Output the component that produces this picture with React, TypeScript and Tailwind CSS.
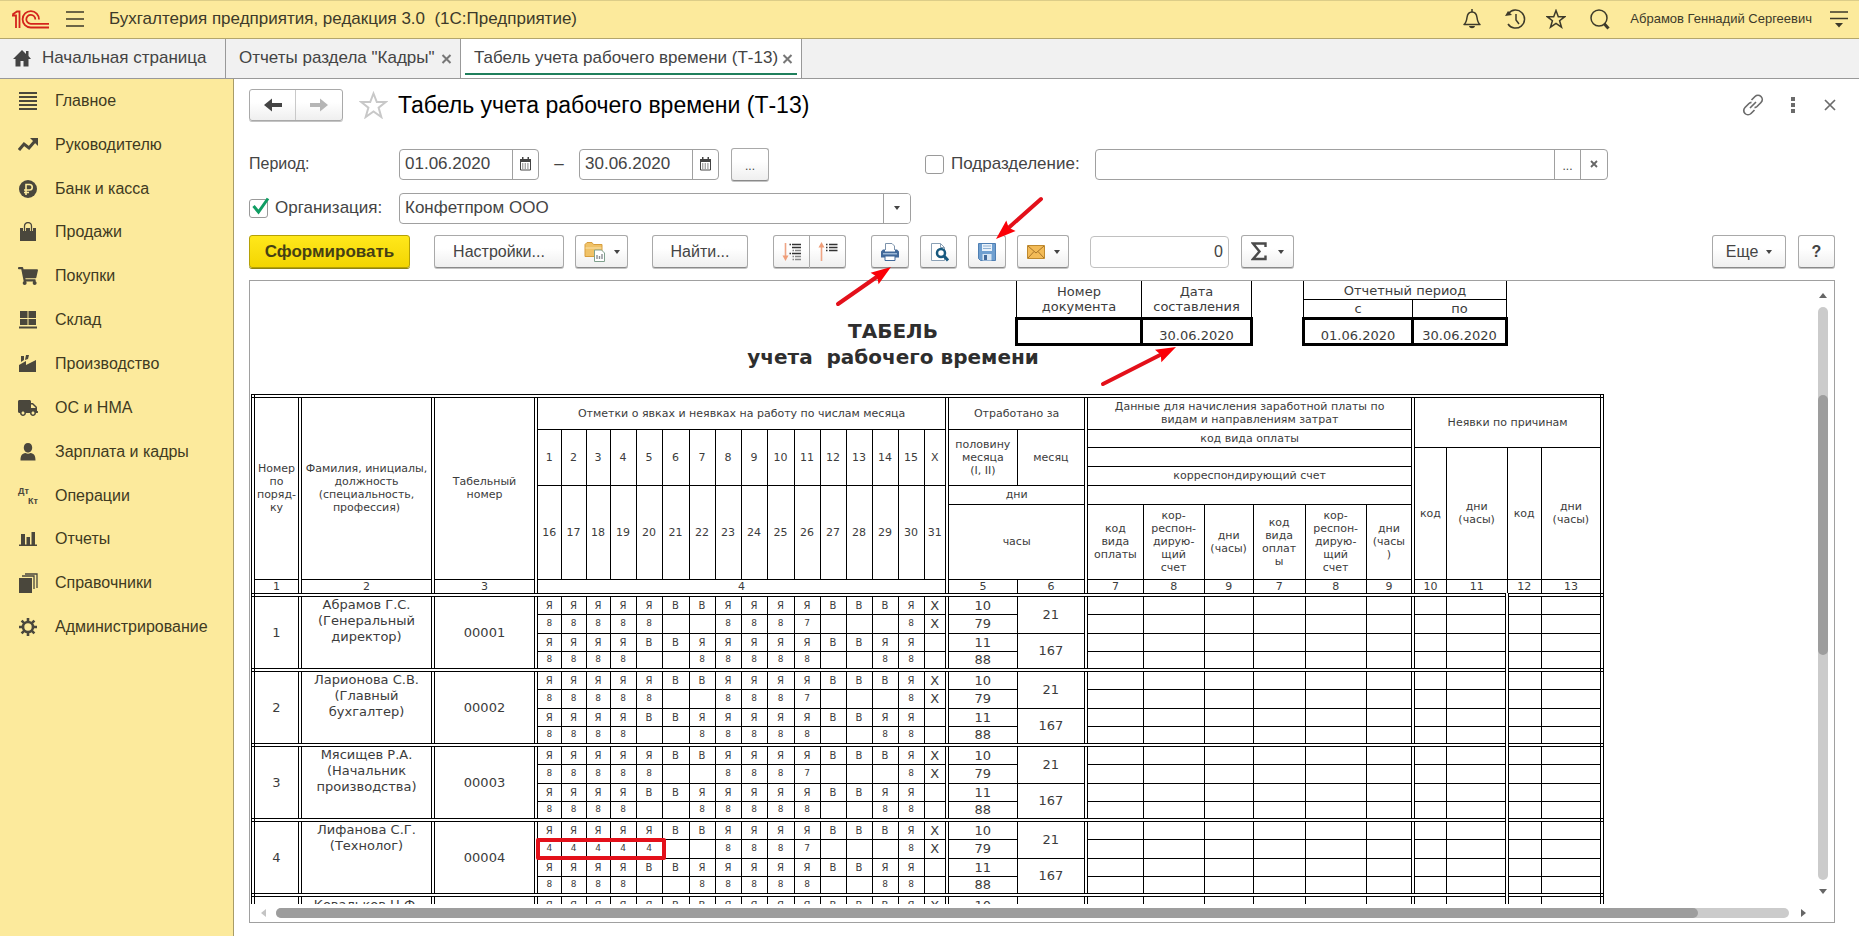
import type { ReactNode } from 'react'
import clsx from 'clsx'
import { FaShoppingCart, FaTruck } from 'react-icons/fa'

const iconProps = { width: 20, height: 20, viewBox: '0 0 20 20', 'aria-hidden': true }

const menu: { label: string; icon: ReactNode }[] = [
  {
    label: 'Главное',
    icon: (
      <svg {...iconProps}>
        <path d="M1 1h18v2H1zM1 5h18v2H1zM1 9h18v2H1zM1 13h18v2H1zM1 17h18v2H1z" fill="currentColor" />
      </svg>
    ),
  },
  {
    label: 'Руководителю',
    icon: (
      <svg {...iconProps}>
        <path d="M1 15l5-6 5 4 6-7" fill="none" stroke="currentColor" strokeWidth="3" />
        <path d="M12 3h8v8z" fill="currentColor" />
      </svg>
    ),
  },
  {
    label: 'Банк и касса',
    icon: (
      <svg {...iconProps}>
        <circle cx="10" cy="10" r="9" fill="currentColor" />
        <path d="M8 16V5.500h3.500a2.500 2.500 0 0 1 0 5.500H6M6 13.500h5" fill="none" stroke="#fcea9c" strokeWidth="1.600" />
      </svg>
    ),
  },
  {
    label: 'Продажи',
    icon: (
      <svg {...iconProps}>
        <path d="M2 6h16v13H2z" fill="currentColor" />
        <path d="M6.500 9V4a3.500 3.500 0 0 1 7 0v5" fill="none" stroke="#fcea9c" strokeWidth="3" />
        <path d="M6.500 9V4a3.500 3.500 0 0 1 7 0v5" fill="none" stroke="currentColor" strokeWidth="1.300" />
      </svg>
    ),
  },
  { label: 'Покупки', icon: <FaShoppingCart size={20} aria-hidden /> },
  {
    label: 'Склад',
    icon: (
      <svg {...iconProps}>
        <path d="M2 1h7.500v7H2zM10.500 1H18v7h-7.500zM2 9h7.500v6H2zM10.500 9H18v6h-7.500zM1 16.500h18v2H1z" fill="currentColor" />
      </svg>
    ),
  },
  {
    label: 'Производство',
    icon: (
      <svg {...iconProps}>
        <path d="M1 18v-7l7-4v4l10-5v12zM3 2h3v4L3 8zM8 1h3l-1 4-3 1z" fill="currentColor" />
      </svg>
    ),
  },
  { label: 'ОС и НМА', icon: <FaTruck size={20} aria-hidden /> },
  {
    label: 'Зарплата и кадры',
    icon: (
      <svg {...iconProps}>
        <path
          d="M10 1c2.600 0 4.200 1.800 4.200 4.500S12.600 10.500 10 10.500 5.800 8.200 5.800 5.500 7.400 1 10 1zM2.500 18.500c0-5 1.500-7 5-7.500 1.500 1 3.500 1 5 0 3.500.5 5 2.500 5 7.500z"
          fill="currentColor"
        />
      </svg>
    ),
  },
  {
    label: 'Операции',
    icon: (
      <span className="flex w-5 flex-col text-[9px] leading-[10px] font-bold" aria-hidden>
        <span>Дт</span>
        <span className="text-right">Кт</span>
      </span>
    ),
  },
  {
    label: 'Отчеты',
    icon: (
      <svg {...iconProps}>
        <path d="M3 5h4v11H3zM8.500 8h3.500v8H8.500zM13.500 3h3.500v13h-3.500zM1 15.500h18V17H1z" fill="currentColor" />
      </svg>
    ),
  },
  {
    label: 'Справочники',
    icon: (
      <svg {...iconProps}>
        <path d="M1 5h13v15H1z" fill="currentColor" />
        <path d="M4 3h12v13M7 1h12v14" fill="none" stroke="currentColor" strokeWidth="1.300" />
      </svg>
    ),
  },
  {
    label: 'Администрирование',
    icon: (
      <svg {...iconProps}>
        <circle cx="10" cy="10" r="5" fill="none" stroke="currentColor" strokeWidth="2.600" />
        <path
          d="M10 1v4M10 15v4M1 10h4M15 10h4M3.600 3.600l2.800 2.800M13.600 13.600l2.800 2.800M3.600 16.400l2.800-2.800M13.600 6.400l2.800-2.800"
          stroke="currentColor"
          strokeWidth="2.600"
        />
      </svg>
    ),
  },
]

const columnGroups = [
  [47],
  [133],
  [103],
  [25, 25, 24, 26, 26, 27, 26, 26, 26, 27, 26, 26, 26, 26, 26, 23],
  [70, 69],
  [57, 61, 49, 52, 61, 47],
  [33, 61, 34, 61],
]

const firstHalf = ['1', '2', '3', '4', '5', '6', '7', '8', '9', '10', '11', '12', '13', '14', '15', 'X']
const secondHalf = ['16', '17', '18', '19', '20', '21', '22', '23', '24', '25', '26', '27', '28', '29', '30', '31']

const days1 = 'ЯЯЯЯЯВВЯЯЯЯВВВЯX'
const hours1 = '88888  8887   8X'
const days2 = 'ЯЯЯЯВВЯЯЯЯЯВВЯЯ '
const hours2 = '8888  88888  88 '

const employees = [
  { name: 'Абрамов Г.С.', position: '(Генеральный директор)', code: '00001', hours: hours1 },
  { name: 'Ларионова С.В.', position: '(Главный бухгалтер)', code: '00002', hours: hours1 },
  { name: 'Мясищев Р.А.', position: '(Начальник производства)', code: '00003', hours: hours1 },
  { name: 'Лифанова С.Г.', position: '(Технолог)', code: '00004', hours: '44444  8887   8X', marked: true },
  { name: 'Ковальков Н.Ф.', position: '', code: '00005', hours: hours1 },
]

const buttonClass =
  'flex h-[33px] shrink-0 items-center justify-center rounded-[3px] border border-[#a9a9a9] border-b-[#8a8a8a] bg-linear-to-b from-white from-40% to-[#efefef] text-[#444] shadow-[0_1px_0_#c4c4c4]'

const fieldClass = 'flex h-[31px] items-stretch overflow-hidden rounded-[4px] border border-[#a0a0a0] bg-white'

function Caret() {
  return <span className="border-x-[3px] border-t-4 border-x-transparent border-t-[#444]" />
}

type ArrowProps = {
  className: string
  width: number
  height: number
  from: [number, number]
  to: [number, number]
}

function Arrow({ className, width, height, from, to }: ArrowProps) {
  const angle = Math.atan2(to[1] - from[1], to[0] - from[0])
  const at = (along: number, side: number) => [
    to[0] - along * Math.cos(angle) - side * Math.sin(angle),
    to[1] - along * Math.sin(angle) + side * Math.cos(angle),
  ]
  const neck = at(14, 0)
  const head = [to, at(20, 7), at(17, 0), at(20, -7)].map((p) => p.join(',')).join(' ')

  return (
    <svg className={clsx('pointer-events-none absolute z-10 max-w-none', className)} width={width} height={height} aria-hidden>
      <line x1={from[0]} y1={from[1]} x2={neck[0]} y2={neck[1]} stroke="#e3101a" strokeWidth="4" strokeLinecap="round" />
      <polygon points={head} fill="#fb0007" />
    </svg>
  )
}

function CalendarIcon() {
  return (
    <svg width="13" height="14" viewBox="0 0 13 14" aria-hidden>
      <path d="M1 2h11v3H1zM3 0h1.500v3H3zM8.500 0H10v3H8.500z" fill="#444" />
      <path d="M1.500 2.500h10v10.500h-10z" fill="none" stroke="#444" />
      <path d="M3 7h7M3 9h7M3 11h7" stroke="#555" strokeDasharray="1.400 1.200" />
    </svg>
  )
}

function Header() {
  return (
    <header className="flex h-[39px] shrink-0 items-center border-t border-b border-t-[#dccd88] border-b-[#b3a66c] bg-[#fcea9c] pr-[10px] pb-px pl-3 text-[#3d3a2a]">
      <svg width="37" height="19" viewBox="0 0 37 19" fill="none" stroke="#d4241c" strokeWidth="1.800" role="img" aria-label="1С">
        <path d="M0 5.500h4V18M0.500 4.500L5 1.500h2.500V18" />
        <path d="M27 9.500A8.200 8.200 0 1 0 18.800 17.500H37" />
        <path d="M23.300 9.500A4.500 4.500 0 1 0 18.800 13.800H37" />
      </svg>
      <button aria-label="Меню" className="ml-4">
        <svg width="20" height="18" viewBox="0 0 20 18" stroke="currentColor" strokeWidth="1.500" aria-hidden>
          <path d="M1 2h18M1 9h18M1 16h18" />
        </svg>
      </button>
      <span className="ml-6 text-[17px] whitespace-pre">Бухгалтерия предприятия, редакция 3.0  (1С:Предприятие)</span>

      <div className="ml-auto flex items-center">
        <button aria-label="Уведомления">
          <svg width="20" height="22" viewBox="0 0 20 22" fill="none" stroke="currentColor" strokeWidth="1.500" aria-hidden>
            <path d="M2 16.500c2-1.500 2.500-3 3-7C5.500 5.500 7.500 4 10 4s4.500 1.500 5 5.500c.5 4 1 5.500 3 7z" strokeLinejoin="round" />
            <path d="M10 1v3" />
            <path d="M7 18h6c-.5 3-5.500 3-6 0z" fill="currentColor" stroke="none" />
          </svg>
        </button>
        <button aria-label="История" className="ml-[22px]">
          <svg width="22" height="22" viewBox="0 0 22 22" fill="none" stroke="currentColor" strokeWidth="1.500" aria-hidden>
            <path d="M4.500 5.500a9 9 0 1 1-.5 10.500" />
            <path d="M1 8l7-1-4-4z" fill="currentColor" stroke="none" />
            <path d="M12 6v6l3 4" />
          </svg>
        </button>
        <button aria-label="Избранное" className="ml-5">
          <svg width="20" height="20" viewBox="0 0 20 20" fill="none" stroke="currentColor" strokeWidth="1.500" aria-hidden>
            <path d="M10 1.500l2.300 6.200h6.400l-5.100 4 1.900 6.500L10 14.400l-5.500 3.800 1.900-6.500-5.100-4h6.400z" />
          </svg>
        </button>
        <button aria-label="Поиск" className="mr-5 ml-6">
          <svg width="20" height="21" viewBox="0 0 20 21" fill="none" stroke="currentColor" strokeWidth="1.500" aria-hidden>
            <circle cx="9" cy="9" r="8" />
            <path d="M14 14.500l4.500 5" strokeWidth="3" />
          </svg>
        </button>
        <span className="text-[13px]">Абрамов Геннадий Сергеевич</span>
        <button aria-label="Настройки окна" className="ml-[17px]">
          <svg width="20" height="18" viewBox="0 0 20 18" aria-hidden>
            <path d="M1 2h18M1 8.500h18" stroke="currentColor" strokeWidth="1.600" />
            <path d="M6 13h8l-4 4.500z" fill="currentColor" />
          </svg>
        </button>
      </div>
    </header>
  )
}

function Tabs() {
  return (
    <nav className="flex h-10 shrink-0 border-b border-[#999] bg-[#f1f1f1] text-[17px] text-[#444]">
      <a href="#home" className="flex w-[226px] items-center border-r border-[#999] pb-[2px] pl-3">
        <svg width="20" height="18" viewBox="0 0 20 18" className="mr-[10px]" aria-hidden>
          <path d="M10 1L1 10h2.500v7.500h5V12h3v5.500h5V10H19L16.500 7V2h-2.500v3z" fill="#444" />
        </svg>
        Начальная страница
      </a>
      <div className="flex w-[235px] items-center justify-between border-r border-[#999] pr-2 pb-[2px] pl-[13px]">
        <a href="#reports">Отчеты раздела "Кадры"</a>
        <CloseButton />
      </div>
      <div className="relative flex w-[341px] items-center justify-between border-r border-[#999] bg-white pr-2 pb-[2px] pl-[13px]">
        <a href="#t13">Табель учета рабочего времени (Т-13)</a>
        <CloseButton />
        <span className="absolute right-1 bottom-[3px] left-1 h-[2px] bg-[#1f7f5c]" />
      </div>
    </nav>
  )
}

function CloseButton() {
  return (
    <button aria-label="Закрыть" className="mt-[3px] text-[#777]">
      <svg width="11" height="10" viewBox="0 0 11 10" stroke="currentColor" strokeWidth="2" aria-hidden>
        <path d="M1.500 1l8 8M9.500 1l-8 8" />
      </svg>
    </button>
  )
}

function Sidebar() {
  return (
    <aside className="w-[234px] shrink-0 border-r border-[#a89c68] bg-[#fcea9c]">
      <ul className="grid h-[570px] auto-rows-fr text-base text-[#3f3a22]">
        {menu.map((item) => (
          <li key={item.label} className="flex items-center">
            <a href="#section" className="flex items-center gap-[17px] pl-[18px]">
              <span className="text-[#4a473c]">{item.icon}</span>
              {item.label}
            </a>
          </li>
        ))}
      </ul>
    </aside>
  )
}

function TitleRow() {
  return (
    <div className="flex h-8 items-center">
      <div className="flex h-8 rounded-[3px] border border-[#a9a9a9] bg-linear-to-b from-white from-40% to-[#efefef] shadow-[0_1px_0_#c4c4c4]">
        <button aria-label="Назад" className="flex w-[46px] items-center justify-center border-r border-[#c9c9c9] text-[#444]">
          <svg width="18" height="14" viewBox="0 0 18 14" aria-hidden>
            <path d="M0 7l8-6.500v4.500h10v4H8v4.500z" fill="currentColor" />
          </svg>
        </button>
        <button aria-label="Вперед" className="flex w-[46px] items-center justify-center text-[#b5b5b5]">
          <svg width="18" height="14" viewBox="0 0 18 14" aria-hidden>
            <path d="M18 7l-8-6.500v4.500H0v4h10v4.500z" fill="currentColor" />
          </svg>
        </button>
      </div>
      <button aria-label="В избранное" className="ml-4">
        <svg width="29" height="28" viewBox="0 0 29 28" fill="none" stroke="#c8c8c8" strokeWidth="2" aria-hidden>
          <path d="M14.500 2.500l3.300 8.500h9l-7.200 5.600 2.700 9.400-7.800-5.600L6.700 26l2.700-9.400L2.200 11h9z" />
        </svg>
      </button>
      <h1 className="ml-[10px] text-[23px] text-black">Табель учета рабочего времени (Т-13)</h1>
      <div className="ml-auto flex items-center text-[#6b6b6b]">
        <button aria-label="Ссылка">
          <svg width="22" height="22" viewBox="0 0 22 22" fill="none" stroke="currentColor" strokeWidth="1.700" aria-hidden>
            <path d="M9.500 6l3.500-3.500a4 4 0 0 1 6 6L15 12.500a4 4 0 0 1-2.500 1.100M12.500 16L9 19.500a4 4 0 0 1-6-6L7 9.500a4 4 0 0 1 2.500-1.100M8 14l6-6" />
          </svg>
        </button>
        <button aria-label="Еще действия" className="ml-6">
          <svg width="10" height="18" viewBox="0 0 10 18" aria-hidden>
            <path d="M3 1h4v4H3zM3 7h4v4H3zM3 13h4v4H3z" fill="currentColor" />
          </svg>
        </button>
        <button aria-label="Закрыть форму" className="mr-[-2px] ml-[25px]">
          <svg width="14" height="12" viewBox="0 0 14 12" stroke="currentColor" strokeWidth="1.700" aria-hidden>
            <path d="M2 1l10 10M12 1L2 11" />
          </svg>
        </button>
      </div>
    </div>
  )
}

function DateField({ id, label, value }: { id: string; label: string; value: string }) {
  return (
    <div className={clsx(fieldClass, 'w-[140px]')}>
      <input id={id} aria-label={label} defaultValue={value} className="w-0 flex-1 px-[5px] text-[#444] outline-none" />
      <button aria-label="Выбрать дату" className="flex w-[26px] items-center justify-center border-l border-[#a0a0a0]">
        <CalendarIcon />
      </button>
    </div>
  )
}

function Checkbox({ id, checked }: { id: string; checked?: boolean }) {
  return (
    <span className="relative flex">
      <input
        id={id}
        type="checkbox"
        defaultChecked={checked}
        className="peer size-[19px] appearance-none rounded-[3px] border border-[#9a9a9a] bg-white"
      />
      <svg
        className="pointer-events-none absolute -top-[2px] left-[2px] hidden peer-checked:block"
        width="19"
        height="18"
        viewBox="0 0 19 18"
        fill="none"
        aria-hidden
      >
        <path d="M2.500 9l5 6L17 1.500" stroke="#0f9d63" strokeWidth="3" />
      </svg>
    </span>
  )
}

function Filters() {
  return (
    <div className="mt-[27px] text-[17px] text-[#444]">
      <div className="flex h-8 items-center">
        <label htmlFor="from" className="w-[150px] shrink-0 text-base">
          Период:
        </label>
        <DateField id="from" label="Начало периода" value="01.06.2020" />
        <span className="w-10 text-center">–</span>
        <DateField id="to" label="Конец периода" value="30.06.2020" />
        <button aria-label="Выбрать период" className={clsx(buttonClass, 'ml-3 w-[38px] pt-1 text-xs')}>
          ...
        </button>
        <div className="ml-[156px] flex items-center">
          <Checkbox id="division-on" />
          <label htmlFor="division-on" className="ml-[7px] w-36">
            Подразделение:
          </label>
        </div>
        <div className={clsx(fieldClass, 'w-[513px]')}>
          <input aria-label="Подразделение" className="w-0 flex-1 px-[5px] outline-none" />
          <button aria-label="Выбрать" className="w-[26px] border-l border-[#a0a0a0] pt-1 text-xs">
            ...
          </button>
          <button aria-label="Очистить" className="flex w-[27px] items-center justify-center border-l border-[#a0a0a0]">
            <svg width="8" height="8" viewBox="0 0 8 8" stroke="#666" strokeWidth="1.800" aria-hidden>
              <path d="M1 1l6 6M7 1L1 7" />
            </svg>
          </button>
        </div>
      </div>

      <div className="mt-3 flex h-8 items-center">
        <Checkbox id="org-on" checked />
        <label htmlFor="org-on" className="ml-[7px] w-[124px]">
          Организация:
        </label>
        <div className={clsx(fieldClass, 'relative w-[512px]')}>
          <select aria-label="Организация" className="w-full appearance-none px-[5px] text-[#444] outline-none">
            <option>Конфетпром ООО</option>
          </select>
          <span className="pointer-events-none absolute inset-y-0 right-0 flex w-[27px] items-center justify-center border-l border-[#a0a0a0] bg-white">
            <Caret />
          </span>
        </div>
      </div>
    </div>
  )
}

function Toolbar() {
  return (
    <div className="mt-[11px] flex h-[33px] items-center text-base">
      <button className="h-[33px] w-[161px] shrink-0 rounded-[3px] border border-[#b5a106] bg-linear-to-b from-[#ffe81a] to-[#f3d500] text-[17px] font-bold text-[#453f14] shadow-[0_1px_0_#8f8412]">
        Сформировать
      </button>
      <button className={clsx(buttonClass, 'ml-6 w-[130px]')}>Настройки...</button>
      <button aria-label="Варианты отчета" className={clsx(buttonClass, 'ml-[11px] w-[53px] gap-2')}>
        <svg width="22" height="22" viewBox="0 0 22 22" aria-hidden>
          <path d="M1 3.500L3 1.500h5l1.500 2H18v12H1z" fill="#f0c267" stroke="#d79d3c" />
          <path d="M1.500 7h16" stroke="#fbe3ac" />
          <path d="M10.500 9h7l3 3v8.500h-10z" fill="#fff" stroke="#7fa08d" />
          <path d="M13 18v-4M15.500 18v-3M18 18v-5" stroke="#8a8f94" strokeWidth="1.400" />
        </svg>
        <Caret />
      </button>
      <button className={clsx(buttonClass, 'ml-6 w-24')}>Найти...</button>

      <button aria-label="Развернуть группы" className={clsx(buttonClass, 'ml-[25px] w-[37px] rounded-r-none')}>
        <svg width="20" height="20" viewBox="0 0 20 20" fill="none" aria-hidden>
          <path d="M3.500 1v13" stroke="#efa585" strokeWidth="1.600" />
          <path d="M0.500 13.500h6L3.500 19z" fill="#ef9d78" />
          <path d="M7.500 2.500h1.500M7.500 11.500h1.500M10 2.500h9M10 5.500h9M10 11.500h9" stroke="#333" strokeWidth="1.600" />
          <path d="M10.500 8.500h1.500M13 8.500h6M10.500 14.500h1.500M13 14.500h6M10.500 17.500h1.500M13 17.500h6" stroke="#888" strokeWidth="1.600" />
        </svg>
      </button>
      <button aria-label="Свернуть группы" className={clsx(buttonClass, 'w-9 rounded-l-none border-l-0')}>
        <svg width="20" height="20" viewBox="0 0 20 20" fill="none" aria-hidden>
          <path d="M3.500 5v14" stroke="#efa585" strokeWidth="1.600" />
          <path d="M0.500 5.500h6L3.500 0z" fill="#ef9d78" />
          <path d="M8 2.500h1.500M11 2.500h8.500M8 5.500h1.500M11 5.500h8.500M8 8.500h1.500M11 8.500h8.500" stroke="#333" strokeWidth="1.600" />
        </svg>
      </button>

      <span className="relative ml-[25px] flex">
        <button aria-label="Печать" className={clsx(buttonClass, 'w-[38px]')}>
          <svg width="20" height="20" viewBox="0 0 20 20" aria-hidden>
            <path d="M5.500 8V1.500H12l2.500 2.500v4" fill="#fff" stroke="#7d93ab" />
            <path d="M3 7.500h2v2h10v-2h2l2 2v6H1v-6z" fill="#41699a" />
            <path d="M3 11h14v1.500H3z" fill="#9db8d6" />
            <path d="M5 14h10v4.500H5z" fill="#fff" stroke="#41699a" />
          </svg>
        </button>
        <Arrow className="top-7 left-[-40px]" width={64} height={46} from={[7, 41]} to={[60, 4]} />
      </span>
      <button aria-label="Предварительный просмотр" className={clsx(buttonClass, 'ml-[11px] w-[37px]')}>
        <svg width="20" height="20" viewBox="0 0 20 20" fill="none" aria-hidden>
          <path d="M2.500 1.500h9l4 4v13h-13z" fill="#fff" stroke="#8aa0b5" />
          <path d="M11.500 1.500v4h4" stroke="#8aa0b5" />
          <circle cx="12" cy="11" r="4" stroke="#17597f" strokeWidth="2.500" fill="#fff" />
          <path d="M15 14l4 4.500" stroke="#17597f" strokeWidth="3" />
        </svg>
      </button>
      <span className="relative ml-[11px] flex">
        <button aria-label="Сохранить" className={clsx(buttonClass, 'w-[38px]')}>
          <svg width="20" height="20" viewBox="0 0 20 20" aria-hidden>
            <path d="M1.500 1.500h17v17h-15l-2-2z" fill="#6f9fd0" stroke="#4f7fb3" />
            <path d="M5 2h10v7H5z" fill="#eaf2fa" />
            <path d="M6 4h8M6 6.500h8" stroke="#8fb1d3" />
            <path d="M5.500 12h9v6.500h-9z" fill="#d7e5f3" />
            <path d="M7 13h3v5H7z" fill="#41699a" />
          </svg>
        </button>
        <Arrow className="-top-[42px] left-[24px]" width={56} height={50} from={[49, 6]} to={[4, 46]} />
      </span>
      <button aria-label="Отправить" className={clsx(buttonClass, 'ml-[11px] w-[52px] gap-[9px]')}>
        <svg width="18" height="14" viewBox="0 0 18 14" aria-hidden>
          <path d="M0.500 0.500h17v13h-17z" fill="#f3bb57" stroke="#bf8a2f" />
          <path d="M1 1l8 7 8-7M1 13l6-6.500M17 13l-6-6.500" fill="none" stroke="#a8752a" />
        </svg>
        <Caret />
      </button>
      <input
        aria-label="Сумма ячеек"
        defaultValue="0"
        className="ml-[21px] h-8 w-[139px] rounded-[4px] border border-[#c0c0c0] px-[5px] text-right text-[#444]"
      />
      <button aria-label="Сумма" className={clsx(buttonClass, 'ml-3 w-[53px] gap-[11px]')}>
        <svg width="16" height="19" viewBox="0 0 16 19" fill="none" aria-hidden>
          <path d="M14.500 5V1.500H2L8.500 9.500 2 17h12.500v-3.500" stroke="#4a4a4a" strokeWidth="2.400" />
        </svg>
        <Caret />
      </button>

      <button className={clsx(buttonClass, 'ml-auto w-[74px] gap-2')}>
        Еще
        <Caret />
      </button>
      <button aria-label="Справка" className={clsx(buttonClass, 'ml-3 w-[37px] font-bold')}>
        ?
      </button>
    </div>
  )
}

function DocumentHeader() {
  const cell = 'border border-black p-0 font-normal'
  const value = 'border-[3px] border-black p-0 pt-[6px] align-bottom'

  return (
    <div className="flex h-[113px] items-start pl-[521px] text-[13px] leading-[15px]">
      <h2 className="flex w-[244px] flex-col items-center pt-[37px] text-xl leading-[26px] font-bold whitespace-pre text-[#2e2e2e]">
        <span>ТАБЕЛЬ</span>
        <span>учета  рабочего времени</span>
      </h2>
      <table className="-mt-px w-[238px] table-fixed border-collapse text-center">
        <colgroup>
          <col className="w-[125px]" />
          <col className="w-[110px]" />
        </colgroup>
        <tbody>
          <tr className="h-[38px]">
            <th className={cell}>
              Номер
              <br />
              документа
            </th>
            <th className={cell}>
              Дата
              <br />
              составления
            </th>
          </tr>
          <tr className="h-[26px]">
            <td className={value} />
            <td className={clsx(value, 'relative')}>
              30.06.2020
              <Arrow className="top-[23px] left-[-45px]" width={84} height={48} from={[5, 41]} to={[78, 4]} />
            </td>
          </tr>
        </tbody>
      </table>
      <table className="-mt-px ml-[49px] w-[206px] table-fixed border-collapse text-center">
        <colgroup>
          <col className="w-[109px]" />
          <col className="w-[94px]" />
        </colgroup>
        <tbody>
          <tr className="h-[19px]">
            <th className={cell} colSpan={2}>
              Отчетный период
            </th>
          </tr>
          <tr className="h-[19px]">
            <th className={cell}>с</th>
            <th className={cell}>по</th>
          </tr>
          <tr className="h-[26px]">
            <td className={value}>01.06.2020</td>
            <td className={value}>30.06.2020</td>
          </tr>
        </tbody>
      </table>
    </div>
  )
}

const th = 'border border-black p-0 font-normal'
const td = 'border border-black p-0'

function TimesheetHead() {
  return (
    <thead className="border-4 border-double border-black text-[11px] leading-[13px]">
      <tr className="h-[33px]">
        <th className={th} rowSpan={6}>
          Номер
          <br />
          по
          <br />
          поряд-
          <br />
          ку
        </th>
        <th className={th} rowSpan={6}>
          Фамилия, инициалы,
          <br />
          должность
          <br />
          (специальность,
          <br />
          профессия)
        </th>
        <th className={th} rowSpan={6}>
          Табельный
          <br />
          номер
        </th>
        <th className={th} colSpan={16}>
          Отметки о явках и неявках на работу по числам месяца
        </th>
        <th className={th} colSpan={2}>
          Отработано за
        </th>
        <th className={th} colSpan={6}>
          Данные для начисления заработной платы по
          <br />
          видам и направлениям затрат
        </th>
        <th className={th} colSpan={4} rowSpan={2}>
          Неявки по причинам
        </th>
      </tr>
      <tr className="h-[18px]">
        {firstHalf.map((day) => (
          <th key={day} className={th} rowSpan={3}>
            {day}
          </th>
        ))}
        <th className={th} rowSpan={3}>
          половину
          <br />
          месяца
          <br />
          (I, II)
        </th>
        <th className={th} rowSpan={3}>
          месяц
        </th>
        <th className={th} colSpan={6}>
          код вида оплаты
        </th>
      </tr>
      <tr className="h-[19px]">
        <th className={th} colSpan={6} />
        <th className={th} rowSpan={4}>
          код
        </th>
        <th className={th} rowSpan={4}>
          дни
          <br />
          (часы)
        </th>
        <th className={th} rowSpan={4}>
          код
        </th>
        <th className={th} rowSpan={4}>
          дни
          <br />
          (часы)
        </th>
      </tr>
      <tr className="h-[19px]">
        <th className={th} colSpan={6}>
          корреспондирующий счет
        </th>
      </tr>
      <tr className="h-[19px]">
        {secondHalf.map((day) => (
          <th key={day} className={th} rowSpan={2}>
            {day}
          </th>
        ))}
        <th className={th} colSpan={2}>
          дни
        </th>
        <th className={th} colSpan={6} />
      </tr>
      <tr className="h-[75px]">
        <th className={th} colSpan={2}>
          часы
        </th>
        {['оплаты', 'оплат\nы'].map((pay) => [
          <th key={pay} className={clsx(th, 'whitespace-pre-line')}>
            {'код\nвида\n' + pay}
          </th>,
          <th key={pay + '-account'} className={clsx(th, 'whitespace-pre-line')}>
            {'кор-\nреспон-\nдирую-\nщий\nсчет'}
          </th>,
          <th key={pay + '-days'} className={clsx(th, 'whitespace-pre-line')}>
            {pay === 'оплаты' ? 'дни\n(часы)' : 'дни\n(часы\n)'}
          </th>,
        ])}
      </tr>
      <tr className="h-4">
        <th className={th}>1</th>
        <th className={th}>2</th>
        <th className={th}>3</th>
        <th className={th} colSpan={16}>
          4
        </th>
        {[5, 6, 7, 8, 9, 7, 8, 9, 10, 11, 12, 13].map((n, i) => (
          <th key={i} className={th}>
            {n}
          </th>
        ))}
      </tr>
    </thead>
  )
}

function EmployeeRows({ employee, index }: { employee: (typeof employees)[number]; index: number }) {
  const lines = [days1, employee.hours, days2, hours2]
  const halfTotals = ['10', '79', '11', '88']

  return (
    <tbody className="border-4 border-double border-black text-[13px] leading-[15px]">
      {lines.map((line, row) => (
        <tr key={row} className={row === 2 ? 'h-[18px]' : 'h-[19px]'}>
          {row === 0 ? (
            <>
              <td className={td} rowSpan={4}>
                {index + 1}
              </td>
              <td className={clsx(td, 'px-1 align-top leading-4')} rowSpan={4}>
                {employee.name}
                <br />
                {employee.position}
              </td>
              <td className={td} rowSpan={4}>
                {employee.code}
              </td>
            </>
          ) : null}
          {line.split('').map((mark, day) => (
            <td
              key={day}
              className={clsx(td, 'relative', mark !== 'X' && (row % 2 ? 'text-[9px]' : 'text-[10px]'))}
            >
              {mark}
              {employee.marked && row === 1 && day === 0 ? (
                <span className="absolute -top-[2px] -left-[2px] z-10 h-[22px] w-[130px] rounded-[2px] border-4 border-[#e3101a]" />
              ) : null}
            </td>
          ))}
          <td className={td}>{halfTotals[row]}</td>
          {row % 2 === 0 ? (
            <td className={td} rowSpan={2}>
              {row === 0 ? '21' : '167'}
            </td>
          ) : null}
          {Array.from({ length: 10 }, (_, i) => (
            <td key={i} className={clsx(td, i === 8 && 'border-l-4 [border-left-style:double]')} />
          ))}
        </tr>
      ))}
    </tbody>
  )
}

function Sheet() {
  return (
    <section
      aria-label="Табель Т-13"
      className="mt-3 mb-[13px] flex min-h-0 flex-1 flex-col border border-[#a0a0a0] bg-white"
    >
      <div className="flex min-h-0 flex-1">
        <div className="min-w-0 flex-1 overflow-hidden font-['DejaVu_Sans',sans-serif] text-[#3c3c3c]">
          <DocumentHeader />
          <table className="ml-px w-[1353px] table-fixed border-collapse text-center">
            {columnGroups.map((group, i) => (
              <colgroup key={i} className="border-4 border-double border-black">
                {group.map((width, j) => (
                  <col key={j} style={{ width }} />
                ))}
              </colgroup>
            ))}
            <TimesheetHead />
            {employees.map((employee, i) => (
              <EmployeeRows key={employee.code} employee={employee} index={i} />
            ))}
          </table>
        </div>
        {/* vertical scrollbar */}
        <div className="flex w-[18px] shrink-0 flex-col items-center pt-3 pr-1 pb-[10px]">
          <span className="border-x-4 border-b-[5px] border-x-transparent border-b-[#666]" />
          <div className="my-[9px] flex w-[10px] flex-1 flex-col rounded-full bg-[#cbcbcb] pt-[88px]">
            <div className="h-[260px] rounded-full bg-[#9d9d9d]" />
          </div>
          <span className="border-x-4 border-t-[5px] border-x-transparent border-t-[#666]" />
        </div>
      </div>
      {/* horizontal scrollbar */}
      <div className="flex h-[18px] shrink-0 items-center pr-[28px] pl-[11px]">
        <span className="border-y-4 border-r-[5px] border-y-transparent border-r-[#c4c4c4]" />
        <div className="mr-3 ml-[10px] h-[10px] flex-1 rounded-full bg-[#cbcbcb]">
          <div className="h-[10px] w-[94%] rounded-full bg-[#9d9d9d]" />
        </div>
        <span className="border-y-4 border-l-[5px] border-y-transparent border-l-[#666]" />
      </div>
    </section>
  )
}

export default function App() {
  return (
    <div className="flex h-screen flex-col bg-white font-['Liberation_Sans',Arial,sans-serif]">
      <Header />
      <Tabs />
      <div className="flex min-h-0 flex-1">
        <Sidebar />
        <main className="flex min-w-0 flex-1 flex-col pt-[10px] pr-6 pl-[15px]">
          <TitleRow />
          <Filters />
          <Toolbar />
          <Sheet />
        </main>
      </div>
    </div>
  )
}
